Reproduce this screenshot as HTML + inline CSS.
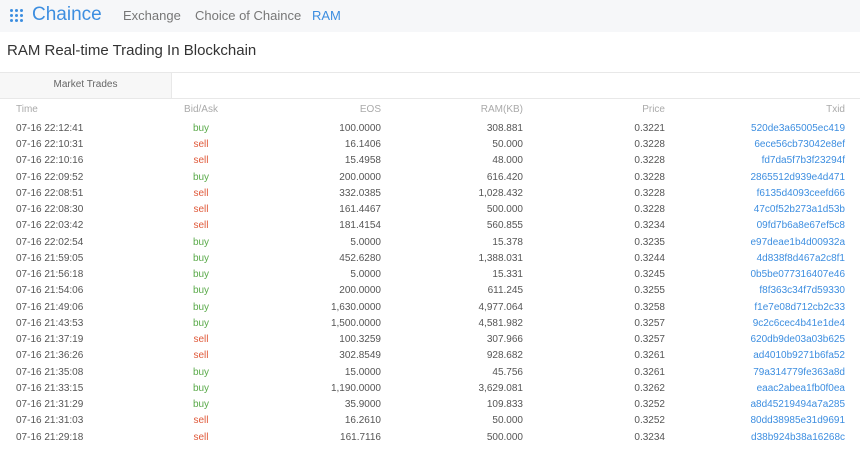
<!DOCTYPE html><html><head><style>
body{margin:0;width:860px;height:454px;background:#fff;font-family:"Liberation Sans",sans-serif;overflow:hidden;position:relative}
.hdr{position:absolute;left:0;top:0;width:860px;height:32px;background:#f6f7f9}
.logo{position:absolute;left:32px;top:4px;font-size:19px;color:#3d8ee0}
.dots{position:absolute;left:10px;top:9px;width:14px;height:12px}
.dots i{position:absolute;width:3px;height:3px;border-radius:50%;background:#3d8ee0}
.nav{position:absolute;top:8px;font-size:13px;color:#777}
h1{position:absolute;left:7px;top:42px;margin:0;font-size:15px;font-weight:normal;color:#333}
.tabs{position:absolute;left:0;top:72px;width:860px;height:25px;border-top:1px solid #e8e8e8;border-bottom:1px solid #e8e8e8}
.tab{position:absolute;left:0;top:0;width:171px;height:25px;background:#f7f7f7;border-right:1px solid #e8e8e8;text-align:center;line-height:24px;font-size:10px;color:#666}
.r{position:absolute;left:0;width:860px;font-size:10px;height:16px;color:#555}
.r span{position:absolute;top:0;white-space:nowrap}
.h{color:#aaa}
.c1{left:16px}.c2{left:171px;width:60px;text-align:center}.c3{right:479px}.c4{right:337px}.c5{right:195px}.c6{right:15px;color:#3d8ee0}
.h .c6{color:#aaa}
.b{color:#5aaa4a}.s{color:#e0593a}
</style></head><body>
<div class="hdr">
<div class="dots"><i style="left:0;top:0"></i><i style="left:5px;top:0"></i><i style="left:10px;top:0"></i><i style="left:0;top:5px"></i><i style="left:5px;top:5px"></i><i style="left:10px;top:5px"></i><i style="left:0;top:10px"></i><i style="left:5px;top:10px"></i><i style="left:10px;top:10px"></i></div>
<div class="logo">Chaince</div>
<div class="nav" style="left:123px">Exchange</div>
<div class="nav" style="left:195px">Choice of Chaince</div>
<div class="nav" style="left:312px;color:#3d8ee0">RAM</div>
</div>
<h1>RAM Real-time Trading In Blockchain</h1>
<div class="tabs"><div class="tab">Market Trades</div></div>
<div class="r h" style="top:104px"><span class="c1">Time</span><span class="c2">Bid/Ask</span><span class="c3">EOS</span><span class="c4">RAM(KB)</span><span class="c5">Price</span><span class="c6">Txid</span></div>
<div class="r" style="top:123px"><span class="c1">07-16 22:12:41</span><span class="c2 b">buy</span><span class="c3">100.0000</span><span class="c4">308.881</span><span class="c5">0.3221</span><span class="c6">520de3a65005ec419</span></div>
<div class="r" style="top:139px"><span class="c1">07-16 22:10:31</span><span class="c2 s">sell</span><span class="c3">16.1406</span><span class="c4">50.000</span><span class="c5">0.3228</span><span class="c6">6ece56cb73042e8ef</span></div>
<div class="r" style="top:155px"><span class="c1">07-16 22:10:16</span><span class="c2 s">sell</span><span class="c3">15.4958</span><span class="c4">48.000</span><span class="c5">0.3228</span><span class="c6">fd7da5f7b3f23294f</span></div>
<div class="r" style="top:172px"><span class="c1">07-16 22:09:52</span><span class="c2 b">buy</span><span class="c3">200.0000</span><span class="c4">616.420</span><span class="c5">0.3228</span><span class="c6">2865512d939e4d471</span></div>
<div class="r" style="top:188px"><span class="c1">07-16 22:08:51</span><span class="c2 s">sell</span><span class="c3">332.0385</span><span class="c4">1,028.432</span><span class="c5">0.3228</span><span class="c6">f6135d4093ceefd66</span></div>
<div class="r" style="top:204px"><span class="c1">07-16 22:08:30</span><span class="c2 s">sell</span><span class="c3">161.4467</span><span class="c4">500.000</span><span class="c5">0.3228</span><span class="c6">47c0f52b273a1d53b</span></div>
<div class="r" style="top:220px"><span class="c1">07-16 22:03:42</span><span class="c2 s">sell</span><span class="c3">181.4154</span><span class="c4">560.855</span><span class="c5">0.3234</span><span class="c6">09fd7b6a8e67ef5c8</span></div>
<div class="r" style="top:237px"><span class="c1">07-16 22:02:54</span><span class="c2 b">buy</span><span class="c3">5.0000</span><span class="c4">15.378</span><span class="c5">0.3235</span><span class="c6">e97deae1b4d00932a</span></div>
<div class="r" style="top:253px"><span class="c1">07-16 21:59:05</span><span class="c2 b">buy</span><span class="c3">452.6280</span><span class="c4">1,388.031</span><span class="c5">0.3244</span><span class="c6">4d838f8d467a2c8f1</span></div>
<div class="r" style="top:269px"><span class="c1">07-16 21:56:18</span><span class="c2 b">buy</span><span class="c3">5.0000</span><span class="c4">15.331</span><span class="c5">0.3245</span><span class="c6">0b5be077316407e46</span></div>
<div class="r" style="top:285px"><span class="c1">07-16 21:54:06</span><span class="c2 b">buy</span><span class="c3">200.0000</span><span class="c4">611.245</span><span class="c5">0.3255</span><span class="c6">f8f363c34f7d59330</span></div>
<div class="r" style="top:302px"><span class="c1">07-16 21:49:06</span><span class="c2 b">buy</span><span class="c3">1,630.0000</span><span class="c4">4,977.064</span><span class="c5">0.3258</span><span class="c6">f1e7e08d712cb2c33</span></div>
<div class="r" style="top:318px"><span class="c1">07-16 21:43:53</span><span class="c2 b">buy</span><span class="c3">1,500.0000</span><span class="c4">4,581.982</span><span class="c5">0.3257</span><span class="c6">9c2c6cec4b41e1de4</span></div>
<div class="r" style="top:334px"><span class="c1">07-16 21:37:19</span><span class="c2 s">sell</span><span class="c3">100.3259</span><span class="c4">307.966</span><span class="c5">0.3257</span><span class="c6">620db9de03a03b625</span></div>
<div class="r" style="top:350px"><span class="c1">07-16 21:36:26</span><span class="c2 s">sell</span><span class="c3">302.8549</span><span class="c4">928.682</span><span class="c5">0.3261</span><span class="c6">ad4010b9271b6fa52</span></div>
<div class="r" style="top:367px"><span class="c1">07-16 21:35:08</span><span class="c2 b">buy</span><span class="c3">15.0000</span><span class="c4">45.756</span><span class="c5">0.3261</span><span class="c6">79a314779fe363a8d</span></div>
<div class="r" style="top:383px"><span class="c1">07-16 21:33:15</span><span class="c2 b">buy</span><span class="c3">1,190.0000</span><span class="c4">3,629.081</span><span class="c5">0.3262</span><span class="c6">eaac2abea1fb0f0ea</span></div>
<div class="r" style="top:399px"><span class="c1">07-16 21:31:29</span><span class="c2 b">buy</span><span class="c3">35.9000</span><span class="c4">109.833</span><span class="c5">0.3252</span><span class="c6">a8d45219494a7a285</span></div>
<div class="r" style="top:415px"><span class="c1">07-16 21:31:03</span><span class="c2 s">sell</span><span class="c3">16.2610</span><span class="c4">50.000</span><span class="c5">0.3252</span><span class="c6">80dd38985e31d9691</span></div>
<div class="r" style="top:432px"><span class="c1">07-16 21:29:18</span><span class="c2 s">sell</span><span class="c3">161.7116</span><span class="c4">500.000</span><span class="c5">0.3234</span><span class="c6">d38b924b38a16268c</span></div>
</body></html>
